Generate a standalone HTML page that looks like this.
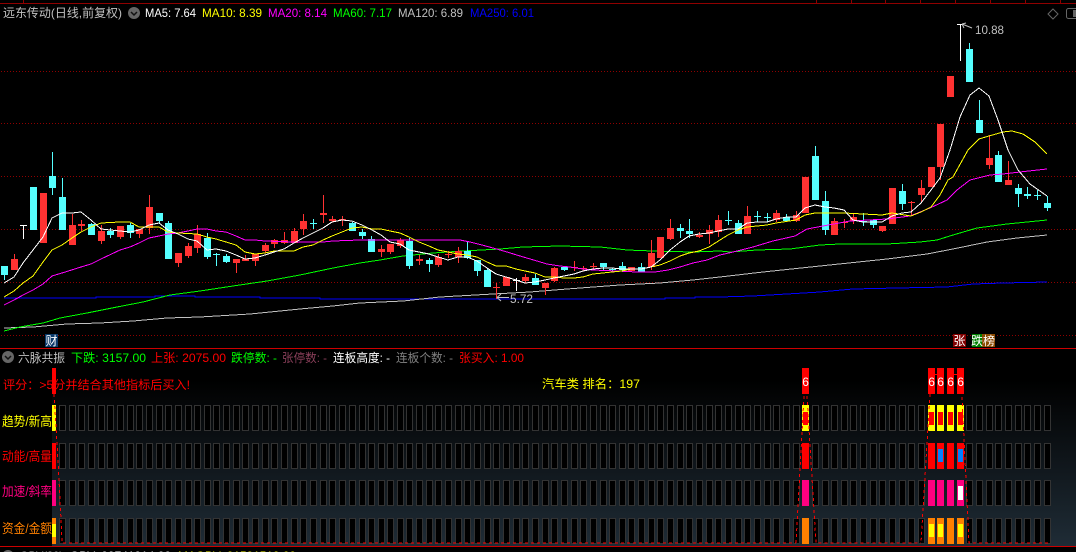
<!DOCTYPE html>
<html><head><meta charset="utf-8"><style>
html,body{margin:0;padding:0;background:#000;width:1076px;height:552px;overflow:hidden}
svg{display:block}
text{font-family:"Liberation Sans","WenQuanYi Zen Hei","Noto Sans CJK SC",sans-serif;font-size:12px}
</style></head><body>
<svg width="1076" height="552" viewBox="0 0 1076 552" xmlns="http://www.w3.org/2000/svg">
<defs>
<linearGradient id="bg" gradientUnits="userSpaceOnUse" x1="0" y1="380" x2="0" y2="546"><stop offset="0" stop-color="#000"/><stop offset="1" stop-color="#1f2c36"/></linearGradient>
<path id="cells" fill="#000" stroke="#333" d="M59.5.5h6v25h-6zM69.5.5h6v25h-6zM78.5.5h6v25h-6zM88.5.5h6v25h-6zM98.5.5h6v25h-6zM107.5.5h6v25h-6zM117.5.5h6v25h-6zM127.5.5h6v25h-6zM136.5.5h6v25h-6zM146.5.5h6v25h-6zM156.5.5h6v25h-6zM165.5.5h6v25h-6zM175.5.5h6v25h-6zM185.5.5h6v25h-6zM194.5.5h6v25h-6zM204.5.5h6v25h-6zM213.5.5h6v25h-6zM223.5.5h6v25h-6zM233.5.5h6v25h-6zM242.5.5h6v25h-6zM252.5.5h6v25h-6zM262.5.5h6v25h-6zM271.5.5h6v25h-6zM281.5.5h6v25h-6zM291.5.5h6v25h-6zM300.5.5h6v25h-6zM310.5.5h6v25h-6zM320.5.5h6v25h-6zM329.5.5h6v25h-6zM339.5.5h6v25h-6zM349.5.5h6v25h-6zM359.5.5h6v25h-6zM368.5.5h6v25h-6zM378.5.5h6v25h-6zM387.5.5h6v25h-6zM397.5.5h6v25h-6zM406.5.5h6v25h-6zM416.5.5h6v25h-6zM426.5.5h6v25h-6zM435.5.5h6v25h-6zM445.5.5h6v25h-6zM455.5.5h6v25h-6zM464.5.5h6v25h-6zM474.5.5h6v25h-6zM484.5.5h6v25h-6zM493.5.5h6v25h-6zM503.5.5h6v25h-6zM513.5.5h6v25h-6zM522.5.5h6v25h-6zM532.5.5h6v25h-6zM542.5.5h6v25h-6zM551.5.5h6v25h-6zM561.5.5h6v25h-6zM571.5.5h6v25h-6zM580.5.5h6v25h-6zM590.5.5h6v25h-6zM600.5.5h6v25h-6zM609.5.5h6v25h-6zM619.5.5h6v25h-6zM628.5.5h6v25h-6zM638.5.5h6v25h-6zM648.5.5h6v25h-6zM657.5.5h6v25h-6zM667.5.5h6v25h-6zM677.5.5h6v25h-6zM686.5.5h6v25h-6zM696.5.5h6v25h-6zM706.5.5h6v25h-6zM715.5.5h6v25h-6zM725.5.5h6v25h-6zM735.5.5h6v25h-6zM744.5.5h6v25h-6zM754.5.5h6v25h-6zM764.5.5h6v25h-6zM773.5.5h6v25h-6zM783.5.5h6v25h-6zM793.5.5h6v25h-6zM812.5.5h6v25h-6zM822.5.5h6v25h-6zM831.5.5h6v25h-6zM841.5.5h6v25h-6zM850.5.5h6v25h-6zM860.5.5h6v25h-6zM870.5.5h6v25h-6zM879.5.5h6v25h-6zM889.5.5h6v25h-6zM899.5.5h6v25h-6zM908.5.5h6v25h-6zM918.5.5h6v25h-6zM966.5.5h6v25h-6zM976.5.5h6v25h-6zM986.5.5h6v25h-6zM995.5.5h6v25h-6zM1005.5.5h6v25h-6zM1015.5.5h6v25h-6zM1024.5.5h6v25h-6zM1034.5.5h6v25h-6zM1044.5.5h6v25h-6z"/>
</defs>
<rect width="1076" height="552" fill="#000"/>

<!-- top border and ticks -->
<g shape-rendering="crispEdges">
<rect x="0" y="3" width="1076" height="1" fill="#8f0000"/>
<path stroke="#8f0000" d="M23.5 0V3M816.5 0V3M851.5 0V3M885.5 0V3M920.5 0V3M955.5 0V3M990.5 0V3M1025.5 0V3M1060.5 0V3"/>
<!-- grid -->
<path stroke="#8f0000" stroke-dasharray="1 2" d="M1 71.5H1076M1 123.5H1076M1 176.5H1076M1 229.5H1076M1 282.5H1076M1 335.5H1076"/>
</g>

<!-- MA lines -->
<g fill="none" shape-rendering="crispEdges">
<polyline stroke="#0000ff" points="4,298 96,298 96,297 155,297 155,296 195,296 195,297 260,297 260,298 320,298 320,299 665,299 665,298 695,298 695,297 720,297 753,296 787,294 820,292 853,289 897,288 947,287 973,284 1003,283 1047,282"/>
<polyline stroke="#c0c0c0" points="4,328 33,327 67,324 100,323 133,321 167,318 200,317 250,314 300,309 333,306 360,303 403,301 440,297 493,294 530,292 567,289 620,285 660,283 693,280 720,277 763,272 820,266 887,259 927,254 953,249 987,242 1017,238 1047,235"/>
<polyline stroke="#00ff00" points="4,331 20,327 43,323 60,318 87,313 117,307 143,302 170,295 200,291 233,286 267,281 300,275 333,268 360,263 380,260 403,256 433,253 463,251 500,249 523,247 560,246 600,247 627,250 653,251 693,252 720,251 730,252 757,250 790,249 820,245 840,244 887,244 920,242 937,240 953,235 977,228 1007,224 1047,220"/>
</g>

<!-- candles -->
<g shape-rendering="crispEdges">
<path fill="none" stroke="#55ffff" d="M4.5 266V280M52.5 152V195M62.5 178V197M91.5 223V235M110.5 228V238M130.5 223V238M159.5 213V224M168.5 221V259M207.5 233V259M216.5 253V266M226.5 254V263M313.5 219V229M352.5 222V231M362.5 229V239M371.5 236V252M409.5 238V269M429.5 258V272M467.5 242V259M477.5 260V276M487.5 268V287M535.5 274V285M564.5 267V271M603.5 263V270M612.5 268V271M622.5 262V271M641.5 263V272M680.5 224V238M689.5 219V238M728.5 211V225M738.5 220V234M757.5 211V222M767.5 213V222M786.5 214V221M815.5 146V200M825.5 191V235M863.5 213V226M873.5 220V228M902.5 184V210M969.5 43V82M979.5 100V133M998.5 151V182M1018.5 184V207M1027.5 187V199M1037.5 190V200M1047.5 196V211"/>
<path fill="#55ffff" d="M1 266h7v9h-7zM30 187h7v43h-7zM49 176h7v12h-7zM59 197h7v33h-7zM88 224h7v11h-7zM107 231h7v4h-7zM127 225h7v8h-7zM156 213h7v8h-7zM165 223h7v36h-7zM204 238h7v19h-7zM213 254h7v1h-7zM223 256h7v6h-7zM310 223h7v1h-7zM349 223h7v8h-7zM359 232h7v4h-7zM368 239h7v13h-7zM406 241h7v25h-7zM426 260h7v4h-7zM464 251h7v7h-7zM474 260h7v11h-7zM484 270h7v17h-7zM532 278h7v7h-7zM561 267h7v3h-7zM600 263h7v4h-7zM609 269h7v1h-7zM619 266h7v4h-7zM638 267h7v5h-7zM677 228h7v3h-7zM686 231h7v3h-7zM725 220h7v1h-7zM735 223h7v11h-7zM754 216h7v1h-7zM764 217h7v1h-7zM783 217h7v4h-7zM812 156h7v44h-7zM822 201h7v29h-7zM860 221h7v1h-7zM870 220h7v5h-7zM899 191h7v13h-7zM966 49h7v33h-7zM976 120h7v13h-7zM995 155h7v27h-7zM1015 188h7v6h-7zM1024 194h7v2h-7zM1034 195h7v1h-7zM1044 203h7v5h-7z"/>
<path fill="none" stroke="#ff3232" d="M14.5 254V270M72.5 214V245M81.5 220V231M101.5 225V244M120.5 226V239M139.5 229V238M149.5 195V234M178.5 253V267M188.5 243V258M197.5 225V253M236.5 259V273M245.5 255V261M255.5 254V266M265.5 243V253M274.5 239V248M284.5 232V244M294.5 228V243M303.5 214V235M323.5 195V223M332.5 216V222M342.5 216V226M381.5 245V257M390.5 244V254M400.5 238V248M419.5 255V265M438.5 254V267M448.5 251V258M458.5 247V263M496.5 283V299M525.5 274V283M545.5 283V295M554.5 267V282M574.5 261V271M583.5 266V271M593.5 263V269M651.5 240V270M670.5 219V240M699.5 232V238M709.5 225V244M718.5 215V237M747.5 206V234M776.5 210V222M796.5 211V222M834.5 218V235M844.5 219V228M853.5 213V224M882.5 226V232M911.5 201V215M921.5 180V202M940.5 124V180M989.5 135V169M1008.5 161V185"/>
<path fill="#ff3232" d="M11 259h7v11h-7zM40 193h7v50h-7zM69 225h7v20h-7zM78 224h7v2h-7zM98 231h7v10h-7zM117 226h7v11h-7zM136 229h7v5h-7zM146 207h7v21h-7zM175 253h7v10h-7zM185 246h7v10h-7zM194 234h7v14h-7zM233 259h7v4h-7zM242 259h7v2h-7zM252 254h7v7h-7zM262 245h7v6h-7zM271 240h7v4h-7zM281 240h7v3h-7zM291 231h7v12h-7zM300 221h7v8h-7zM320 213h7v2h-7zM329 219h7v2h-7zM339 219h7v1h-7zM378 249h7v3h-7zM387 244h7v8h-7zM397 240h7v6h-7zM416 259h7v2h-7zM435 257h7v8h-7zM445 254h7v1h-7zM455 251h7v6h-7zM493 287h7v1h-7zM503 277h7v9h-7zM522 277h7v4h-7zM542 283h7v5h-7zM551 268h7v13h-7zM571 267h7v1h-7zM580 268h7v1h-7zM590 266h7v1h-7zM628 267h7v4h-7zM648 253h7v14h-7zM657 237h7v21h-7zM667 228h7v11h-7zM696 235h7v2h-7zM706 230h7v4h-7zM715 220h7v12h-7zM744 216h7v18h-7zM773 213h7v7h-7zM793 215h7v6h-7zM802 177h7v36h-7zM831 221h7v14h-7zM841 222h7v1h-7zM850 217h7v4h-7zM879 226h7v5h-7zM889 188h7v36h-7zM908 202h7v1h-7zM918 188h7v7h-7zM928 167h7v20h-7zM937 124h7v43h-7zM947 76h7v21h-7zM986 158h7v7h-7zM1005 180h7v5h-7z"/>
<path fill="none" stroke="#fff" d="M23.5 225V239M20 225.5H27M516.5 278V291M513 280.5H520M960.5 24V61M957 24.5H964"/>
</g>

<!-- upper MA lines -->
<g fill="none" shape-rendering="crispEdges">
<polyline stroke="#ff00ff" points="4,305 14,300 23,295 33,290 43,284 52,276 62,273 81,267 91,264 101,259 120,250 130,247 139,243 149,238 159,236 168,234 178,233 188,231 197,229 207,229 216,231 226,232 236,236 245,240 255,240 265,241 294,242 323,242 333,241 360,240 460,240 470,242 482,245 493,248 507,252 520,256 537,261 547,264 560,266 570,267 583,269 593,270 617,271 637,272 655,272 668,270 680,267 693,263 707,260 720,255 733,252 753,247 773,241 795,236 807,229 823,226 850,221 887,219 910,216 930,208 947,200 957,190 970,180 990,175 1003,174 1020,172 1047,169"/>
<polyline stroke="#ffff00" points="4,297 14,291 23,283 33,276 43,262 52,250 62,245 72,238 81,232 91,227 101,223 120,222 130,222 139,227 149,227 159,227 168,232 178,233 197,234 207,237 216,239 226,242 236,245 245,252 255,254 265,253 274,251 294,251 303,247 313,245 323,240 332,236 342,232 352,228 362,227 372,229 381,229 390,231 400,233 409,237 419,242 429,246 438,250 448,252 458,254 467,255 477,257 487,262 496,266 506,266 516,269 525,271 535,273 545,277 554,277 564,278 574,278 583,277 593,274 603,273 612,272 622,271 631,269 641,269 651,267 660,265 670,261 680,256 689,253 699,251 709,247 720,240 728,235 738,230 747,227 767,225 776,223 796,220 805,215 815,213 844,213 863,214 882,215 892,213 911,216 921,212 931,207 940,195 948,180 953,177 968,150 979,139 989,136 1003,132 1012,131 1023,134 1035,142 1047,154"/>
<polyline stroke="#ffffff" points="4,283 14,277 23,263 33,250 43,237 52,218 62,213 72,213 81,212 91,220 101,229 120,231 130,232 139,230 149,225 159,223 168,230 178,234 188,239 197,241 207,250 216,249 226,251 236,255 245,259 255,258 265,255 274,252 284,249 294,243 303,238 313,233 323,228 332,222 342,220 352,221 362,225 372,230 381,235 390,242 400,244 409,250 419,252 429,254 438,257 448,260 458,257 467,257 477,261 487,268 496,274 506,277 516,280 525,283 535,282 545,280 554,278 564,276 574,274 583,271 593,269 603,268 612,268 622,269 631,269 641,269 651,267 660,260 670,250 680,242 689,236 699,234 709,233 718,231 728,229 738,229 747,223 757,222 767,222 776,219 787,217 796,217 805,208 815,205 825,207 834,208 844,210 853,220 863,222 873,222 882,222 892,216 902,213 911,212 921,203 931,190 940,178 950,150 960,117 970,95 979,88 989,96 998,120 1008,150 1018,170 1030,184 1047,196"/>
</g>

<!-- price annotations -->
<path fill="none" stroke="#c0c0c0" d="M497 297.5H509M497 297.5L501 294M497 297.5L501 301M962 24L972 28M962 24L966 23M962 24L964 28"/>
<text x="510" y="303" fill="#c0c0c0" textLength="23" lengthAdjust="spacingAndGlyphs">5.72</text>
<text x="975" y="34" fill="#c0c0c0" textLength="29" lengthAdjust="spacingAndGlyphs">10.88</text>

<!-- header -->
<text x="3" y="17" fill="#c0c0c0" textLength="119" lengthAdjust="spacingAndGlyphs">远东传动(日线,前复权)</text>
<circle cx="134" cy="13" r="6" fill="#666"/>
<path fill="none" stroke="#111" stroke-width="1.5" d="M131 12l3 3 3-3"/>
<text x="145" y="17" fill="#fff" textLength="51" lengthAdjust="spacingAndGlyphs">MA5: 7.64</text>
<text x="202" y="17" fill="#ffff00" textLength="60" lengthAdjust="spacingAndGlyphs">MA10: 8.39</text>
<text x="268" y="17" fill="#ff00ff" textLength="59" lengthAdjust="spacingAndGlyphs">MA20: 8.14</text>
<text x="333" y="17" fill="#00ff00" textLength="59" lengthAdjust="spacingAndGlyphs">MA60: 7.17</text>
<text x="398" y="17" fill="#c0c0c0" textLength="65" lengthAdjust="spacingAndGlyphs">MA120: 6.89</text>
<text x="470" y="17" fill="#0000ff" textLength="64" lengthAdjust="spacingAndGlyphs">MA250: 6.01</text>
<path fill="none" stroke="#666" d="M1053 9l5 5-5 5-5-5z"/>
<rect x="1066.5" y="8.5" width="20" height="10" rx="2" fill="none" stroke="#666"/>
<rect x="1073" y="10" width="4" height="7" fill="#666"/>

<!-- tags -->
<g shape-rendering="crispEdges">
<rect x="45" y="334" width="13" height="13" fill="#0a3a6a"/>
<rect x="953" y="334" width="13" height="13" fill="#800000"/>
<rect x="972" y="334" width="10" height="13" fill="#008000"/>
<rect x="982" y="334" width="13" height="13" fill="#8b4a00"/>
</g>
<text x="45.5" y="345" fill="#fff">财</text>
<text x="953.5" y="345" fill="#fff">张</text>
<text x="971" y="345" fill="#fff">跌</text>
<text x="983" y="345" fill="#fff">榜</text>

<!-- separators -->
<g shape-rendering="crispEdges">
<rect x="52" y="380" width="1024" height="166" fill="url(#bg)"/>
<rect x="0" y="348" width="1076" height="1" fill="#cc0000"/>
<rect x="0" y="546" width="1076" height="1" fill="#cc0000"/>
<rect x="0" y="547" width="1076" height="5" fill="#000"/>
</g>

<!-- lower header -->
<circle cx="8" cy="357" r="6" fill="#666"/>
<path fill="none" stroke="#111" stroke-width="1.5" d="M5 356l3 3 3-3"/>
<text x="18" y="362" fill="#c0c0c0" textLength="47" lengthAdjust="spacingAndGlyphs">六脉共振</text>
<text x="71" y="362" fill="#00ff00" textLength="75" lengthAdjust="spacingAndGlyphs">下跌: 3157.00</text>
<text x="151" y="362" fill="#ff0000" textLength="75" lengthAdjust="spacingAndGlyphs">上张: 2075.00</text>
<text x="231" y="362" fill="#00ff00" textLength="46" lengthAdjust="spacingAndGlyphs">跌停数: -</text>
<text x="282" y="362" fill="#8a3f5a" textLength="45" lengthAdjust="spacingAndGlyphs">张停数: -</text>
<text x="333" y="362" fill="#fff" textLength="57" lengthAdjust="spacingAndGlyphs">连板高度: -</text>
<text x="396" y="362" fill="#808080" textLength="57" lengthAdjust="spacingAndGlyphs">连板个数: -</text>
<text x="459" y="362" fill="#ff0000" textLength="65" lengthAdjust="spacingAndGlyphs">张买入: 1.00</text>

<!-- indicator grid -->
<use href="#cells" y="405"/>
<use href="#cells" y="443"/>
<use href="#cells" y="480"/>
<use href="#cells" y="518"/>

<g shape-rendering="crispEdges">
<!-- first column -->
<rect x="52" y="368" width="4" height="26" fill="#ff0000"/>
<rect x="52" y="405" width="4" height="26" fill="#ffff00"/>
<rect x="52" y="443" width="4" height="26" fill="#ff0000"/>
<rect x="52" y="480" width="4" height="26" fill="#ff0080"/>
<rect x="52" y="518" width="4" height="26" fill="#ff8000"/>
<rect x="52" y="524" width="4" height="13" fill="#ffff00"/>
<!-- tops -->
<path fill="#ff0000" d="M802 368h7v26h-7zM928 368h7v26h-7zM937 368h7v26h-7zM947 368h7v26h-7zM957 368h7v26h-7zM935 374h2v1h-2zM954 374h3v1h-3z"/>
<!-- row 1 -->
<path fill="#ffff00" d="M802 405h7v26h-7zM928 405h7v26h-7zM937 405h7v26h-7zM947 405h7v26h-7zM957 405h7v26h-7z"/>
<path fill="#ff0000" d="M803 412h5v13h-5zM929 412h5v13h-5zM938 412h5v13h-5zM948 412h5v13h-5zM958 412h5v13h-5z"/>
<!-- row 2 -->
<path fill="#ff0000" d="M802 443h7v26h-7zM928 443h7v26h-7zM937 443h7v26h-7zM947 443h7v26h-7zM957 443h7v26h-7z"/>
<path fill="#0080ff" d="M938 449h5v13h-5zM958 449h5v13h-5z"/>
<!-- row 3 -->
<path fill="#ff0080" d="M802 480h7v26h-7zM928 480h7v26h-7zM937 480h7v26h-7zM947 480h7v26h-7zM957 480h7v26h-7z"/>
<path fill="#fff" d="M958 486h5v14h-5z"/>
<!-- row 4 -->
<path fill="#ff8000" d="M802 518h7v26h-7zM928 518h7v26h-7zM937 518h7v26h-7zM947 518h7v26h-7zM957 518h7v26h-7z"/>
<path fill="#ffff00" d="M929 524h5v13h-5zM938 524h5v13h-5zM958 524h5v13h-5z"/>
<!-- dashed outlines -->
<path fill="none" stroke="#ff0000" stroke-dasharray="3 3" d="M54 394L57 443L59 480L61 520L62 543H796M804 396L796 543M807 396L816 543H921M930 394L921 543M962 397L969 543H1050"/>
</g>

<!-- left labels -->
<text x="3" y="389" fill="#ff0000" textLength="187" lengthAdjust="spacingAndGlyphs">评分：&gt;5分并结合其他指标后买入!</text>
<text x="542" y="388" fill="#ffff00" textLength="98" lengthAdjust="spacingAndGlyphs">汽车类 排名：197</text>
<g fill="#fff">
<text x="802.2" y="386">6</text>
<text x="928.2" y="386">6</text>
<text x="937.2" y="386">6</text>
<text x="947.2" y="386">6</text>
<text x="957.2" y="386">6</text>
</g>
<text x="2" y="426" fill="#ffff00" textLength="50" lengthAdjust="spacingAndGlyphs" style="font-size:13px">趋势/新高</text>
<text x="2" y="461" fill="#ff0000" textLength="50" lengthAdjust="spacingAndGlyphs" style="font-size:13px">动能/高量</text>
<text x="2" y="496" fill="#ff0080" textLength="50" lengthAdjust="spacingAndGlyphs" style="font-size:13px">加速/斜率</text>
<text x="2" y="533" fill="#ff8000" textLength="50" lengthAdjust="spacingAndGlyphs" style="font-size:13px">资金/金额</text>

<!-- clipped bottom strip -->
<circle cx="8" cy="556" r="6" fill="#666"/>
<text x="20" y="560" fill="#c0c0c0" textLength="43" lengthAdjust="spacingAndGlyphs">OBV(30)</text>
<text x="70" y="560" fill="#fff" textLength="101" lengthAdjust="spacingAndGlyphs">OBV: 99741914.00</text>
<text x="178" y="560" fill="#ffff00" textLength="118" lengthAdjust="spacingAndGlyphs">MAOBV: 91591519.00</text>
</svg>
</body></html>
